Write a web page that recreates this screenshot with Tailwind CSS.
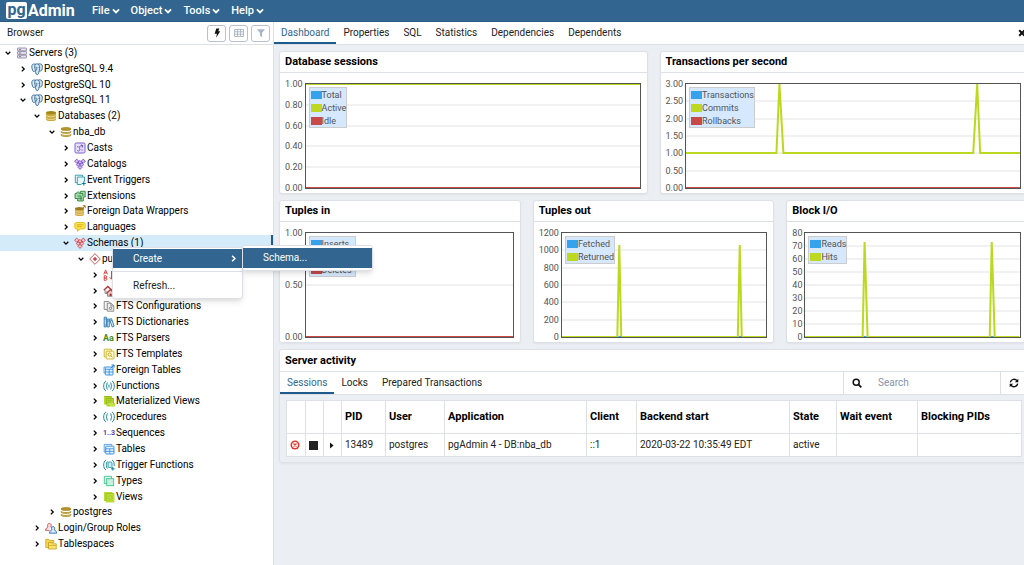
<!DOCTYPE html>
<html lang="en">
<head>
<meta charset="utf-8">
<meta name="viewport" content="width=device-width, initial-scale=1">
<title>pgAdmin 4</title>
<script src="https://cdn.jsdelivr.net/npm/@tailwindcss/browser@4"></script>
</head>
<body class="flex h-screen flex-col overflow-hidden bg-white font-[Roboto,sans-serif] text-[10px] leading-[12px] text-[#222]">

<svg class="hidden" aria-hidden="true">
  <defs>
    <symbol id="down" viewBox="0 0 6 6"><path d="M.7 1.800 3 4.100l2.300-2.300" fill="none" stroke="currentColor" stroke-width="1.300"/></symbol>
    <symbol id="right" viewBox="0 0 6 6"><path d="M1.800.6 4.200 3 1.800 5.400" fill="none" stroke="currentColor" stroke-width="1.300"/></symbol>
    <symbol id="servers" viewBox="0 0 12 12"><g fill="#e6e3ef" stroke="#8f88a8" stroke-width=".9"><rect x="1.500" y="1" width="9" height="2.800" rx=".5"/><rect x="1.500" y="4.600" width="9" height="2.800" rx=".5"/><rect x="1.500" y="8.200" width="9" height="2.800" rx=".5"/></g><path d="M3 2.400h2M3 6h2M3 9.600h2" stroke="#6b6488" stroke-width=".8"/></symbol>
    <symbol id="pg" viewBox="0 0 12 12"><path d="M4.300 1.200C2 .5.6 1.600.8 4c.2 2 1 4.500 2 4.700.7.100 1.200-.9 1.700-1.500.2 1.600-.1 4.200 1.600 4.300 1.700 0 1.700-1.700 1.800-3.500 2 .3 2.800-.5 3-1 .4-1.300.7-4 .1-5C10 .6 8.200.7 7.200 1.100 6.200.8 5.100.8 4.300 1.200Z" fill="#d9e9f5" stroke="#336791" stroke-width=".9"/><path d="M4.300 1.300C3.500 2.800 3.600 5 4.400 7M7.300 1.200c1.400 1.300 1.700 3 1 6.300M4.600 4.300c.8-.4 1.400 0 1.300.9-.1.800-.5 1.600-.3 2.200M8.600 4c-.6 0-.7.600-.3 1" fill="none" stroke="#336791" stroke-width=".9"/></symbol>
    <symbol id="dbs" viewBox="0 0 12 12"><path d="M1 2.600v6.800c0 1 2.200 1.700 5 1.700s5-.7 5-1.700V2.600Z" fill="#c9a83a"/><ellipse cx="6" cy="2.600" rx="5" ry="1.700" fill="#a58618"/><path d="M1 5.300c.6 1.900 9.400 1.900 10 0M1 8c.6 1.900 9.400 1.900 10 0" fill="none" stroke="#f5e6b0" stroke-width=".8"/></symbol>
    <symbol id="db" viewBox="0 0 12 12"><ellipse cx="6" cy="2.900" rx="5" ry="1.500" fill="#b4942a" stroke="#a58618" stroke-width=".7"/><path d="M1 5.400v.6c0 1.900 10 1.900 10 0v-.6c-.8 1.500-9.200 1.500-10 0ZM1 8.300v.7c0 2 10 2 10 0v-.7c-.8 1.500-9.200 1.500-10 0Z" fill="#f1dc8d" stroke="#a58618" stroke-width=".8"/></symbol>
    <symbol id="casts" viewBox="0 0 12 12"><rect x="1" y="1" width="10" height="10" rx="1.200" fill="#e7defa" stroke="#7d62c9"/><path d="M3.200 8.500c1.800 1.300 3.500-.2 2.300-2.200-.8-1.500.6-3 3.200-2.500M7 2.700 8.900 3.800 7.900 5.700M3 4.800h1.400M7.400 8h1.400" fill="none" stroke="#6a4cc0" stroke-width=".9"/></symbol>
    <symbol id="catalogs" viewBox="0 0 12 12"><g fill="#cdb7f1" stroke="#7c52c8" stroke-width=".9"><path d="m2.700 1.100 2.100 2.100-2.100 2.100L.6 3.200ZM9.300 1.100l2.100 2.100-2.100 2.100-2.100-2.100ZM6 2.400l1.800 1.800L6 6 4.200 4.200ZM4.200 4.900 6 6.700 4.200 8.500 2.400 6.700ZM7.800 4.900l1.800 1.800-1.800 1.800L6 6.700ZM6 7.400l2 2-2 2-2-2Z"/></g></symbol>
    <symbol id="schemas" viewBox="0 0 12 12"><g fill="#f5c3c5" stroke="#cc474f" stroke-width=".9"><path d="m2.700 1.100 2.100 2.100-2.100 2.100L.6 3.200ZM9.300 1.100l2.100 2.100-2.100 2.100-2.100-2.100ZM6 2.400l1.800 1.800L6 6 4.200 4.200ZM4.200 4.900 6 6.700 4.200 8.500 2.400 6.700ZM7.800 4.900l1.800 1.800-1.800 1.800L6 6.700ZM6 7.400l2 2-2 2-2-2Z"/></g></symbol>
    <symbol id="schema" viewBox="0 0 12 12"><path d="m6 .7 5.300 5.300L6 11.300.7 6Z" fill="#fff" stroke="#cc474f" stroke-width=".9"/><path d="m6 3.800 2.200 2.200L6 8.200 3.800 6Z" fill="#cc474f"/></symbol>
    <symbol id="evt" viewBox="0 0 12 12"><path d="M3 8.700H1.300V1.200h7.200v1.600" fill="none" stroke="#2595a8" stroke-width=".9"/><path d="M7.500 10.500H3.300V3h7.200v4.500" fill="#e3f7fa" stroke="#2595a8" stroke-width=".9"/><path d="M9.800 7.500v4M7.800 9.500h4" stroke="#127c94" stroke-width="1.100"/></symbol>
    <symbol id="ext" viewBox="0 0 12 12"><path d="M1 3.500h1.800c-.3-2 2.500-2.200 2.400-.5V3.500h1.200V1.300h4.800V7H9.300v4H3.700V8.500H1Z" fill="#a8d8ae" stroke="#2d8440" stroke-width=".9"/><path d="M3.500 6H7v4.500M6.500 3.500h2.300V6M4 8.300h4" fill="none" stroke="#2d8440" stroke-width=".9"/></symbol>
    <symbol id="fdw" viewBox="0 0 12 12"><path d="M1 3.600v6c0 2 9 2 9 0v-6Z" fill="#cfaa43"/><ellipse cx="5.500" cy="3.600" rx="4.500" ry="1.500" fill="#9f791f"/><path d="M1 5.700c.5 1.800 8.500 1.800 9 0M1 8c.5 1.800 8.500 1.800 9 0" fill="none" stroke="#f3dfa5" stroke-width=".8"/><path d="M8 3.800 11 .9M8.700.7h2.500v2.500" fill="none" stroke="#a47b1e"/></symbol>
    <symbol id="lang" viewBox="0 0 12 12"><path d="M2.500 1.500h7c1 0 1.700.6 1.700 1.600v3.300c0 1-.7 1.600-1.700 1.600H6l-2.800 2.400.3-2.400h-1C1.500 8 .8 7.400.8 6.400V3.100c0-1 .7-1.600 1.700-1.600Z" fill="#fde250" stroke="#dbb20c" stroke-width=".8"/><path d="M2.800 3.800h6.400M2.800 5.700h5" stroke="#d1a500" stroke-width=".8"/></symbol>
    <symbol id="coll" viewBox="0 0 12 12"><path d="M.8 5.300 2.600.9l1.800 4.400M1.400 3.900h2.400M1.200 6.700v4.600h1.600c1.600 0 1.600-2.300 0-2.300H1.200h1.400c1.500 0 1.500-2.300 0-2.300ZM8.500 2v8M6.600 8.200l1.900 2 1.900-2" fill="none" stroke="#dc4444"/></symbol>
    <symbol id="domain" viewBox="0 0 12 12"><path d="m.8 5.200 4-3.700 4 3.700" fill="none" stroke="#b43232" stroke-width="1.300"/><path d="M2 5v3.500h2V6" fill="#f4d3d3" stroke="#777" stroke-width=".7"/><path d="M4.300 7.700 7.500 5l3.500 2.700v3.500H4.500Z" fill="#f3c9c9" stroke="#6d6d6d" stroke-width=".8"/><path d="M3.700 8 7.500 4.600 11.300 8" fill="none" stroke="#c33b3b" stroke-width="1.100"/><path d="M6.600 11V8.700h2V11" fill="#a73030"/></symbol>
    <symbol id="ftsc" viewBox="0 0 12 12"><path d="M4 9.500H1.200v-8h4.500l1.500 1.500v1" fill="#f0f0f0" stroke="#777" stroke-width=".8"/><path d="M4.300 3.200h3.800l2.700 2.700v5.300H4.300Z" fill="#eee" stroke="#777" stroke-width=".8"/><path d="M8 3.300V6h2.700" fill="none" stroke="#777" stroke-width=".8"/><circle cx="7.500" cy="8.300" r="1.200" fill="none" stroke="#777" stroke-width=".9"/></symbol>
    <symbol id="ftsd" viewBox="0 0 12 12"><path d="M1.200 1.200h2.200v9.700H1.200ZM4.200 3h2.100v7.900H4.200ZM6.500 3.300l2-.7 2.700 7.600-2 .8Z" fill="#d2e9fa" stroke="#2b77ad" stroke-width=".9"/><path d="M1.300 3h2M4.300 5h1.900M7.300 5l1.900-.7M1.300 9h2" stroke="#2b77ad" stroke-width=".7"/></symbol>
    <symbol id="ftst" viewBox="0 0 12 12"><path d="M3 9H1.200V1.200h7.400V3" fill="#fbf4c4" stroke="#cbb52b" stroke-width=".9"/><rect x="3.200" y="3.200" width="7.800" height="7.800" rx=".6" fill="#fdf8d5" stroke="#cbb52b" stroke-width=".9"/><circle cx="6.700" cy="6.500" r="1.600" fill="none" stroke="#c1a616" stroke-width=".9"/><path d="m7.900 7.700 1.700 1.700" stroke="#c1a616"/></symbol>
    <symbol id="ftable" viewBox="0 0 12 12"><path d="M2.500 9H1V3h1.300" fill="none" stroke="#3b92dc" stroke-width=".8"/><rect x="2.300" y="3" width="7.700" height="8" rx=".6" fill="#e0f0fe" stroke="#2f8bdb" stroke-width=".9"/><path d="M2.300 5.300H10M2.300 8H10M6.200 5v6" stroke="#2f8bdb" stroke-width=".8"/><path d="M7.800 4.300 11 1.100M8.600 1h2.500v2.500" fill="none" stroke="#1976cf"/></symbol>
    <symbol id="func" viewBox="0 0 12 12"><path d="M3 1C-.1 2.300-.1 9.700 3 11M9 1c3.100 1.300 3.100 8.700 0 10M4.700 2.500c-1.200 0-.3 2.900-1.700 3.500 1.400.6.500 3.500 1.700 3.500M7.300 2.500c1.200 0 .3 2.900 1.700 3.500-1.400.6-.5 3.500-1.700 3.500" fill="none" stroke="#1f8ea3"/><path d="M5 5.200h2.200M5 6.900h2.200" stroke="#1f8ea3" stroke-width=".8"/></symbol>
    <symbol id="proc" viewBox="0 0 12 12"><path d="M3 1C-.1 2.300-.1 9.700 3 11M9 1c3.100 1.300 3.100 8.700 0 10M4.700 2.500c-1.200 0-.3 2.900-1.700 3.500 1.400.6.5 3.500 1.700 3.500M7.300 2.500c1.200 0 .3 2.900 1.700 3.500-1.400.6-.5 3.500-1.700 3.500" fill="none" stroke="#1f8ea3"/></symbol>
    <symbol id="tfunc" viewBox="0 0 12 12"><path d="M3 1C-.1 2.300-.1 9.700 3 11M9 1c1.800.8 2.300 3.500 2.200 6M4.500 2.500c-1.200 0-.3 2.900-1.500 3.500 1.200.6.300 3.500 1.500 3.500" fill="none" stroke="#1f8ea3"/><rect x="5" y="3" width="4" height="5.500" rx="1" fill="#c5edf2" stroke="#1f8ea3" stroke-width=".8"/><path d="M9.800 8v3.500M8 9.800h3.600" stroke="#127c94"/></symbol>
    <symbol id="mview" viewBox="0 0 12 12"><path d="M1 1h7.500v2h2.300v5H12v3.500H3.500V9.500H1Z" fill="#b5d92c"/><path d="M1.500 1.500h6.700v1.700M3.300 3.300h7v5.200M3.300 3.300v6M4.700 5.200h4M4.700 7.200h3" fill="none" stroke="#86ab12" stroke-width=".7"/><path d="m6 8 3 2.500M9 8l2 3" stroke="#e9f6b4" stroke-width=".7"/></symbol>
    <symbol id="view" viewBox="0 0 12 12"><path d="M1 1h8.500v1.500H11.500v9H3V10H1Z" fill="#b9dc36"/><path d="M3 2.500h8M3 2.500V10" fill="none" stroke="#94b91d" stroke-width=".7"/><circle cx="7.200" cy="6.900" r="2.300" fill="none" stroke="#94b91d" stroke-width=".7" stroke-dasharray="1 .8"/></symbol>
    <symbol id="table" viewBox="0 0 12 12"><path d="M3 9H1.200V1.400h7.600v1.700" fill="#eef7ff" stroke="#3b92dc" stroke-width=".8"/><rect x="2.700" y="3.200" width="8.300" height="7.800" rx=".6" fill="#e3f2ff" stroke="#2f8bdb" stroke-width=".9"/><path d="M2.700 5.800H11M2.700 8.400H11M6.800 5.800V11" stroke="#2f8bdb" stroke-width=".8"/></symbol>
    <symbol id="type" viewBox="0 0 12 12"><path d="M3.500 8.500H1.300V1.300h7.200v2" fill="#d8f7e9" stroke="#42c191" stroke-width=".9"/><rect x="3.700" y="3.700" width="7" height="7" fill="#c5f2df" stroke="#42c191" stroke-width=".9"/></symbol>
    <symbol id="roles" viewBox="0 0 12 12"><path d="M.6 8.300C.8 6.200 2 5.300 3 5c-1-1.700-.2-3.600 1.400-3.600S6.800 3.300 5.800 5l1 .6M.6 8.300h4" fill="#fbe1e1" stroke="#c9444b" stroke-width=".9"/><path d="M4.400 11.200c.2-2 1.300-3 2.500-3.300-1-1.500-.2-3.300 1.200-3.300s2.200 1.800 1.200 3.300c1.200.3 2.100 1.300 2.300 3.300Z" fill="#d7e7fb" stroke="#2f6fbd" stroke-width=".9"/></symbol>
    <symbol id="tspace" viewBox="0 0 12 12"><path d="M.8 9.500V1.300h3l.8 1.200h4.200v2H3.500v5Z" fill="#f8d64e" stroke="#caa21b" stroke-width=".8"/><path d="M3.500 11V4.600h2.800l.8 1.200h4.200V11Z" fill="#fbe36f" stroke="#caa21b" stroke-width=".8"/><path d="M3.600 7.500h7.600" stroke="#caa21b" stroke-width=".7"/></symbol>
  </defs>
</svg>

<header class="flex h-[22px] shrink-0 items-center border-b border-[#2c5c86] bg-[#326690] pl-[6px] text-white">
  <div class="flex w-[86px] items-center text-[16px] leading-[16px] font-bold" aria-label="pgAdmin">
    <span class="mr-px flex h-[17px] w-[21px] justify-center rounded-[2px] bg-white leading-[15px] text-[#326690]">pg</span><span>Admin</span>
  </div>
  <nav class="flex gap-[11px] text-[11px] font-medium">
    <button class="flex items-center gap-[2px]">File<svg class="size-[8px]"><use href="#down"/></svg></button>
    <button class="flex items-center gap-[2px]">Object<svg class="size-[8px]"><use href="#down"/></svg></button>
    <button class="flex items-center gap-[2px]">Tools<svg class="size-[8px]"><use href="#down"/></svg></button>
    <button class="flex items-center gap-[2px]">Help<svg class="size-[8px]"><use href="#down"/></svg></button>
  </nav>
</header>

<div class="flex min-h-0 flex-1">
  <aside class="relative w-[274px] shrink-0 border-r border-[#dde0e6]">
    <div class="flex h-[23px] items-center justify-between border-b border-[#dde0e6] pr-[3px] pl-[7px]">
      <h2>Browser</h2>
      <div class="flex gap-[3px]">
        <button aria-label="Query tool" class="flex h-[17px] w-[19px] items-center justify-center rounded-[3px] border border-[#bac1cd]"><svg class="size-[10px]" viewBox="0 0 10 10"><path d="M4.300.5h3L6.300 3.300h1.900L4.100 9.700l.8-4H2.600Z" fill="#111"/></svg></button>
        <button aria-label="View data" disabled class="flex h-[17px] w-[19px] items-center justify-center rounded-[3px] border border-[#bac1cd]"><svg class="size-[10px]" viewBox="0 0 10 10"><path d="M.5 1.500h9v7h-9ZM.5 3.800h9M.5 6.200h9M3.500 1.500v7M6.500 1.500v7" fill="none" stroke="#a9b4c4" stroke-width=".9"/></svg></button>
        <button aria-label="Filtered rows" disabled class="flex h-[17px] w-[19px] items-center justify-center rounded-[3px] border border-[#bac1cd]"><svg class="size-[10px]" viewBox="0 0 10 10"><path d="M1 1.200h8L6.100 4.800v4.400L3.900 7.500V4.800Z" fill="#a9b4c4"/></svg></button>
      </div>
    </div>
    <ul id="tree" role="tree" class="grid min-h-[507px] auto-rows-fr text-black"></ul>

    <div role="menu" class="absolute top-[225px] left-[112px] z-20 w-[131px] rounded-[3px] border border-[#dde0e6] bg-white pt-px pb-[3px] text-[10px] shadow-md">
      <button role="menuitem" class="flex h-[19px] w-full items-center justify-between bg-[#326690] pr-[5px] pl-[20px] text-white">Create<svg class="size-[7px]"><use href="#right"/></svg></button>
      <hr class="mt-[3px] border-[#dde0e6]">
      <button role="menuitem" class="mt-[4px] flex h-[19px] w-full items-center pl-[20px]">Refresh...</button>
    </div>
    <div role="menu" class="absolute top-[223px] left-[242px] z-30 w-[131px] rounded-[3px] border border-[#dde0e6] bg-white py-[2px] text-[10px] shadow-md">
      <button role="menuitem" class="flex h-[20px] w-full items-center bg-[#326690] pl-[20px] text-white">Schema...</button>
    </div>
  </aside>

  <main class="min-w-0 flex-1 overflow-hidden bg-[#ebeef3]">
    <div class="flex h-[23px] items-stretch border-b border-[#dde0e6] bg-white text-[10px]">
      <nav class="flex flex-1">
        <a href="#" class="border-b-2 border-[#1f5a8c] px-[7px] pt-[5px] text-[#326690]">Dashboard</a>
        <a href="#" class="px-[7px] pt-[5px]">Properties</a>
        <a href="#" class="px-[7px] pt-[5px]">SQL</a>
        <a href="#" class="px-[7px] pt-[5px]">Statistics</a>
        <a href="#" class="px-[7px] pt-[5px]">Dependencies</a>
        <a href="#" class="px-[7px] pt-[5px]">Dependents</a>
      </nav>
      <button aria-label="Close panel" class="-mr-[2px] flex items-center"><svg class="size-[8px]" viewBox="0 0 8 8"><path d="m1.200 1.200 5.600 5.600M6.800 1.200 1.200 6.800" stroke="#111" stroke-width="2"/></svg></button>
    </div>

    <div class="-mr-[4px] flex flex-col gap-[6px] pt-[6px] pl-[5px]">
      <div id="row1" class="grid grid-cols-2 gap-[12px]"></div>
      <div id="row2" class="grid grid-cols-3 gap-[12px]"></div>

      <section class="overflow-hidden rounded-[3px] border border-[#dde0e6] shadow-xs">
        <h3 class="flex h-[22px] items-center border-b border-[#dde0e6] bg-white pl-[5px] text-[11px] font-bold text-black">Server activity</h3>
        <div class="flex h-[23px] border-b border-[#dde0e6] bg-white text-[10px]">
          <nav class="flex flex-1">
            <a href="#" class="border-b-2 border-[#1f5a8c] px-[7px] pt-[5px] text-[#326690]">Sessions</a>
            <a href="#" class="px-[7px] pt-[5px]">Locks</a>
            <a href="#" class="px-[7px] pt-[5px]">Prepared Transactions</a>
          </nav>
          <label class="flex w-[157px] items-center border-l border-[#dde0e6] pl-[8px]">
            <svg class="size-[10px] shrink-0" viewBox="0 0 10 10"><circle cx="4.200" cy="4.200" r="3" fill="none" stroke="#111" stroke-width="1.500"/><path d="m6.300 6.300 3 3" stroke="#111" stroke-width="1.800"/></svg>
            <input type="search" aria-label="Search" placeholder="Search" class="ml-[16px] w-[110px] outline-none placeholder:text-[#8691ab]">
          </label>
          <button aria-label="Refresh" class="flex w-[27px] items-center border-l border-[#dde0e6] pl-[8px]"><svg class="size-[10px]" viewBox="0 0 10 10"><path d="M1.300 4.300A3.800 3.800 0 0 1 8 2.700M8.700 5.700A3.800 3.800 0 0 1 2 7.300" fill="none" stroke="#111" stroke-width="1.400"/><path d="M9.300.8v3.400H5.900ZM.7 9.200V5.800h3.400Z" fill="#111"/></svg></button>
        </div>
        <div class="p-[5px] pl-[6px]">
          <table class="w-full table-fixed border-collapse bg-white text-left text-[10px] [&_td]:border [&_td]:border-[#dde0e6] [&_td]:pl-[3px] [&_th]:border [&_th]:border-[#dde0e6] [&_th]:pl-[3px]">
            <colgroup><col class="w-[19px]"><col class="w-[18px]"><col class="w-[18px]"><col class="w-[44px]"><col class="w-[59px]"><col class="w-[142px]"><col class="w-[50px]"><col class="w-[153px]"><col class="w-[47px]"><col class="w-[81px]"><col></colgroup>
            <thead><tr class="h-[33px] text-[11px] font-bold text-black"><th></th><th></th><th></th><th>PID</th><th>User</th><th>Application</th><th>Client</th><th>Backend start</th><th>State</th><th>Wait event</th><th>Blocking PIDs</th></tr></thead>
            <tbody><tr class="h-[23px]">
              <td><button aria-label="Terminate session" class="block"><svg class="size-[10px]" viewBox="0 0 10 10"><circle cx="5" cy="5" r="4.500" fill="#dd3b30"/><circle cx="5" cy="5" r="2.900" fill="#fff"/><path d="m3.500 3.500 3 3M6.500 3.500l-3 3" stroke="#dd3b30" stroke-width="1.200"/></svg></button></td>
              <td><button aria-label="Cancel query" class="block size-[9px] bg-[#222]"></button></td>
              <td><button aria-label="Show details" class="block"><svg class="size-[9px]" viewBox="0 0 9 9"><path d="M3 1.500v6l3.500-3Z" fill="#111"/></svg></button></td>
              <td>13489</td><td>postgres</td><td>pgAdmin 4 - DB:nba_db</td><td>::1</td><td>2020-03-22 10:35:49 EDT</td><td>active</td><td></td><td></td>
            </tr></tbody>
          </table>
        </div>
      </section>
    </div>
  </main>
</div>

<script>
// Entries: depth, icon, label, expanded
const nodes = [
  [0, 'servers', 'Servers (3)', 1], [1, 'pg', 'PostgreSQL 9.4'], [1, 'pg', 'PostgreSQL 10'], [1, 'pg', 'PostgreSQL 11', 1],
  [2, 'dbs', 'Databases (2)', 1], [3, 'db', 'nba_db', 1], [4, 'casts', 'Casts'], [4, 'catalogs', 'Catalogs'],
  [4, 'evt', 'Event Triggers'], [4, 'ext', 'Extensions'], [4, 'fdw', 'Foreign Data Wrappers'], [4, 'lang', 'Languages'],
  [4, 'schemas', 'Schemas (1)', 1], [5, 'schema', 'pu', 1], [6, 'coll', ''], [6, 'domain', ''],
  [6, 'ftsc', 'FTS Configurations'], [6, 'ftsd', 'FTS Dictionaries'], [6, 'Aa', 'FTS Parsers'], [6, 'ftst', 'FTS Templates'],
  [6, 'ftable', 'Foreign Tables'], [6, 'func', 'Functions'], [6, 'mview', 'Materialized Views'], [6, 'proc', 'Procedures'],
  [6, '1..3', 'Sequences'], [6, 'table', 'Tables'], [6, 'tfunc', 'Trigger Functions'], [6, 'type', 'Types'], [6, 'view', 'Views'],
  [3, 'db', 'postgres'], [2, 'roles', 'Login/Group Roles'], [2, 'tspace', 'Tablespaces']
];
const textIcons = {
  'Aa': '<span class="w-[12px] text-[9px] font-bold text-[#4b8a16]">Aa</span>',
  '1..3': '<span class="w-[12px] text-[7px] font-bold text-[#6a34b5]">1..3</span>'
};
document.getElementById('tree').innerHTML = nodes.map(([depth, icon, label, open]) => `
  <li role="treeitem" class="flex items-center leading-[12px] whitespace-nowrap ${label === 'Schemas (1)' ? 'border-r-2 border-[#1f5a8c] bg-[#d4ecfa]' : ''}" style="padding-left:${5 + Math.round(depth * 14.5)}px">
    <svg class="mr-[5px] size-[6px]"><use href="#${open ? 'down' : 'right'}"/></svg>
    ${textIcons[icon] || `<svg class="size-[12px]"><use href="#${icon}"/></svg>`}<span class="ml-px">${label}</span>
  </li>`).join('');

const blue = '#36a2eb', green = '#bcd820', red = '#c94848';
const swatches = { [blue]: 'bg-[#36a2eb]', [green]: 'bg-[#bcd820]', [red]: 'bg-[#c94848]' };
const charts = {
  row1: [
    { title: 'Database sessions', width: 336, ticks: ['1.00', '0.80', '0.60', '0.40', '0.20', '0.00'],
      legend: [['Total', blue], ['Active', green], ['Idle', red]],
      lines: [[green, '0,0 336,0'], [red, '0,104 336,104']] },
    { title: 'Transactions per second', width: 336, ticks: ['3.00', '2.50', '2.00', '1.50', '1.00', '0.50', '0.00'],
      legend: [['Transactions', blue], ['Commits', green], ['Rollbacks', red]],
      lines: [[green, '0,69 91,69 94,0 98,69 289,69 293,0 296,69 336,69'], [red, '0,104 336,104']] }
  ],
  row2: [
    { title: 'Tuples in', width: 210, ticks: ['1.00', '0.50', '0.00'],
      legend: [['Inserts', blue], ['Updates', green], ['Deletes', red]],
      lines: [[red, '0,104 210,104']] },
    { title: 'Tuples out', width: 207, ticks: ['1200', '1000', '800', '600', '400', '200', '0'],
      legend: [['Fetched', blue], ['Returned', green]],
      lines: [[green, '0,104 56,104 58,12 60,104 178,104 180,12 182,104 207,104'], [blue, '57,104 60,104'], [blue, '179,104 182,104']] },
    { title: 'Block I/O', width: 216, ticks: ['80', '70', '60', '50', '40', '30', '20', '10', '0'],
      legend: [['Reads', blue], ['Hits', green]],
      lines: [[green, '0,104 58,104 60,9 63,104 186,104 188,9 191,104 216,104'], [blue, '59,104 62,104'], [blue, '187,104 190,104']] }
  ]
};
for (const [row, list] of Object.entries(charts)) {
  document.getElementById(row).innerHTML = list.map(c => `
    <section class="rounded-[3px] border border-[#dde0e6] bg-white shadow-xs">
      <h3 class="flex h-[21px] items-center border-b border-[#dde0e6] pl-[5px] text-[11px] font-bold text-black">${c.title}</h3>
      <div class="flex gap-[2px] pt-[10px] pr-[6px] pb-[4px] pl-[5px] text-[9px] text-[#545454]">
        <div class="-my-[5px] flex flex-col justify-between text-right">${c.ticks.map(t => `<span>${t}</span>`).join('')}</div>
        <div class="relative h-[106px] flex-1 border border-[#545454]">
          <svg class="block size-full" viewBox="0 0 ${c.width} 104" preserveAspectRatio="none">
            ${c.ticks.slice(1, -1).map((t, i) => { const y = Math.round(104 * (i + 1) / (c.ticks.length - 1)); return `<path d="M0 ${y}H${c.width}" stroke="#e3e3e3" stroke-width="1"/>`; }).join('')}
            ${c.lines.map(([color, pts]) => `<polyline points="${pts}" fill="none" stroke="${color}" stroke-width="2" vector-effect="non-scaling-stroke"/>`).join('')}
          </svg>
          <ul class="absolute top-[3px] left-[3px] border border-[#ccc] bg-[#d5e8fd]">
            ${c.legend.map(([name, color]) => `<li class="flex h-[13px] items-center pl-px"><span class="h-[8px] w-[11px] ${swatches[color]}"></span>${name}</li>`).join('')}
          </ul>
        </div>
      </div>
    </section>`).join('');
}
</script>
</body>
</html>
